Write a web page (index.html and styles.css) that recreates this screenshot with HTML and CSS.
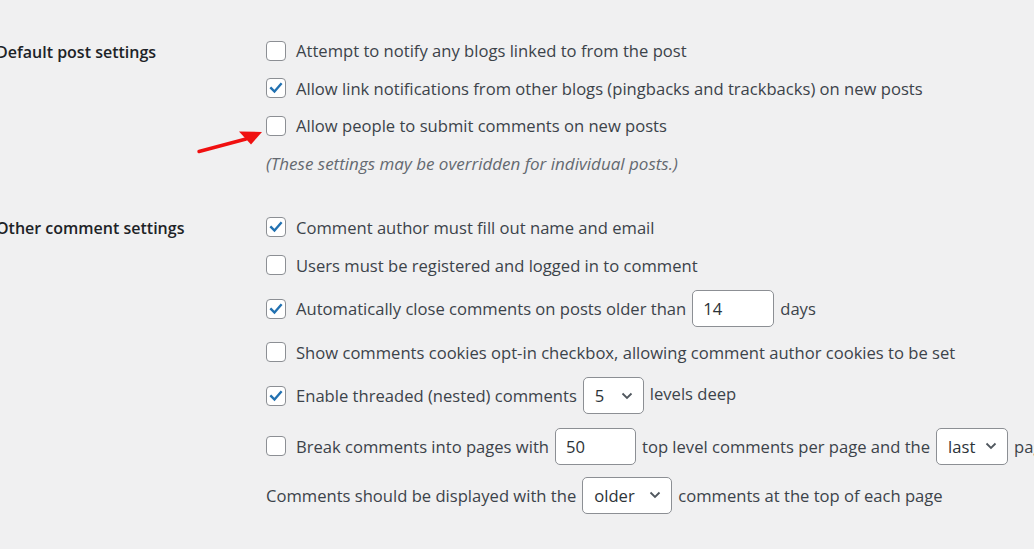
FILE: index.html
```html
<!DOCTYPE html>
<html>
<head>
<meta charset="utf-8">
<link rel="stylesheet" href="styles.css">
</head>
<body>
<div class="page">
  <section class="section s1">
    <div class="th">Default post settings</div>
    <div class="td">
      <div class="row"><span class="cb"></span><span>Attempt to notify any blogs linked to from the post</span></div>
      <div class="row"><span class="cb on"><svg viewBox="0 0 20 20"><path d="M4.6 10.2 L8.3 13.9 L15.4 5.6"/></svg></span><span>Allow link notifications from other blogs (pingbacks and trackbacks) on new posts</span></div>
      <div class="row"><span class="cb"></span><span>Allow people to submit comments on new posts</span></div>
      <div class="row note">(These settings may be overridden for individual posts.)</div>
    </div>
  </section>
  <section class="section s2">
    <div class="th">Other comment settings</div>
    <div class="td">
      <div class="row"><span class="cb on"><svg viewBox="0 0 20 20"><path d="M4.6 10.2 L8.3 13.9 L15.4 5.6"/></svg></span><span>Comment author must fill out name and email</span></div>
      <div class="row"><span class="cb"></span><span>Users must be registered and logged in to comment</span></div>
      <div class="row h48"><span class="cb on"><svg viewBox="0 0 20 20"><path d="M4.6 10.2 L8.3 13.9 L15.4 5.6"/></svg></span><span>Automatically close comments on posts older than</span><span class="input w82">14</span><span>days</span></div>
      <div class="row"><span class="cb"></span><span>Show comments cookies opt-in checkbox, allowing comment author cookies to be set</span></div>
      <div class="row h48"><span class="cb on"><svg viewBox="0 0 20 20"><path d="M4.6 10.2 L8.3 13.9 L15.4 5.6"/></svg></span><span>Enable threaded (nested) comments</span><span class="select w61"><span>5</span><svg viewBox="0 0 12 8"><path d="M1.5 1.5 L6 6 L10.5 1.5"/></svg></span><span class="up">levels deep</span></div>
      <div class="row h52"><span class="cb"></span><span>Break comments into pages with</span><span class="input w81">50</span><span>top level comments per page and the</span><span class="select w72"><span>last</span><svg viewBox="0 0 12 8"><path d="M1.5 1.5 L6 6 L10.5 1.5"/></svg></span><span>page displayed by default</span></div>
      <div class="row h46"><span>Comments should be displayed with the</span><span class="select w90"><span>older</span><svg viewBox="0 0 12 8"><path d="M1.5 1.5 L6 6 L10.5 1.5"/></svg></span><span>comments at the top of each page</span></div>
    </div>
  </section>
  <svg class="arrow" width="80" height="40" viewBox="0 0 80 40">
    <path d="M3 24.5 L50 12" stroke="#f01010" stroke-width="3.4" stroke-linecap="round" fill="none"/>
    <polygon points="43,4.5 66,5 55,17.5" fill="#f01010"/>
  </svg>
</div>
</body>
</html>
```

FILE: styles.css
```css
html, body {
  margin: 0;
  padding: 0;
}
body {
  background: #f0f0f1;
  font-family: "Open Sans", "Noto Sans", sans-serif;
  font-size: 16.6px;
  color: #3c434a;
  overflow: hidden;
  width: 1034px;
  height: 549px;
}
.page {
  position: relative;
  padding-top: 32px;
}
.section {
  display: grid;
  grid-template-columns: 266px 1fr;
}
.s2 {
  margin-top: 26px;
}
.th {
  height: 38px;
  display: flex;
  align-items: center;
  margin-left: -4px;
  padding-top: 2px;
  box-sizing: border-box;
  font-size: 16px;
  font-weight: 600;
  color: #1d2327;
  white-space: nowrap;
}
.td {
  display: flex;
  flex-direction: column;
}
.row {
  height: 37.5px;
  display: flex;
  align-items: center;
  gap: 6px;
  white-space: nowrap;
}
.s2 .row { height: 38px; }
.s2 .row.h48 { height: 49px; }
.s2 .row.h52 { height: 52px; }
.s2 .row.h46 { height: 46px; }
.note {
  font-style: italic;
  font-size: 17px;
  color: #646970;
}
.cb {
  box-sizing: border-box;
  width: 20px;
  height: 20px;
  border: 1px solid #8c8f94;
  border-radius: 4px;
  background: #fff;
  margin-right: 4px;
  flex: none;
  display: flex;
}
.cb svg {
  width: 18px;
  height: 18px;
}
.cb svg path {
  fill: none;
  stroke: #2271b1;
  stroke-width: 2.6;
  stroke-linecap: square;
}
.input, .select {
  box-sizing: border-box;
  height: 37px;
  background: #fff;
  border: 1px solid #8c8f94;
  border-radius: 5px;
  display: flex;
  align-items: center;
  padding: 0 10px;
  color: #2c3338;
  flex: none;
}
.select {
  justify-content: space-between;
  padding: 0 10px 0 11px;
}
.select svg {
  width: 12px;
  height: 8px;
}
.select svg path {
  fill: none;
  stroke: #50575e;
  stroke-width: 1.8;
}
.w82 { width: 82px; }
.w81 { width: 81px; }
.w61 { width: 61px; }
.w72 { width: 72px; }
.w90 { width: 90px; }
.up { position: relative; top: -2px; }
.arrow {
  position: absolute;
  left: 196px;
  top: 127px;
}
```
